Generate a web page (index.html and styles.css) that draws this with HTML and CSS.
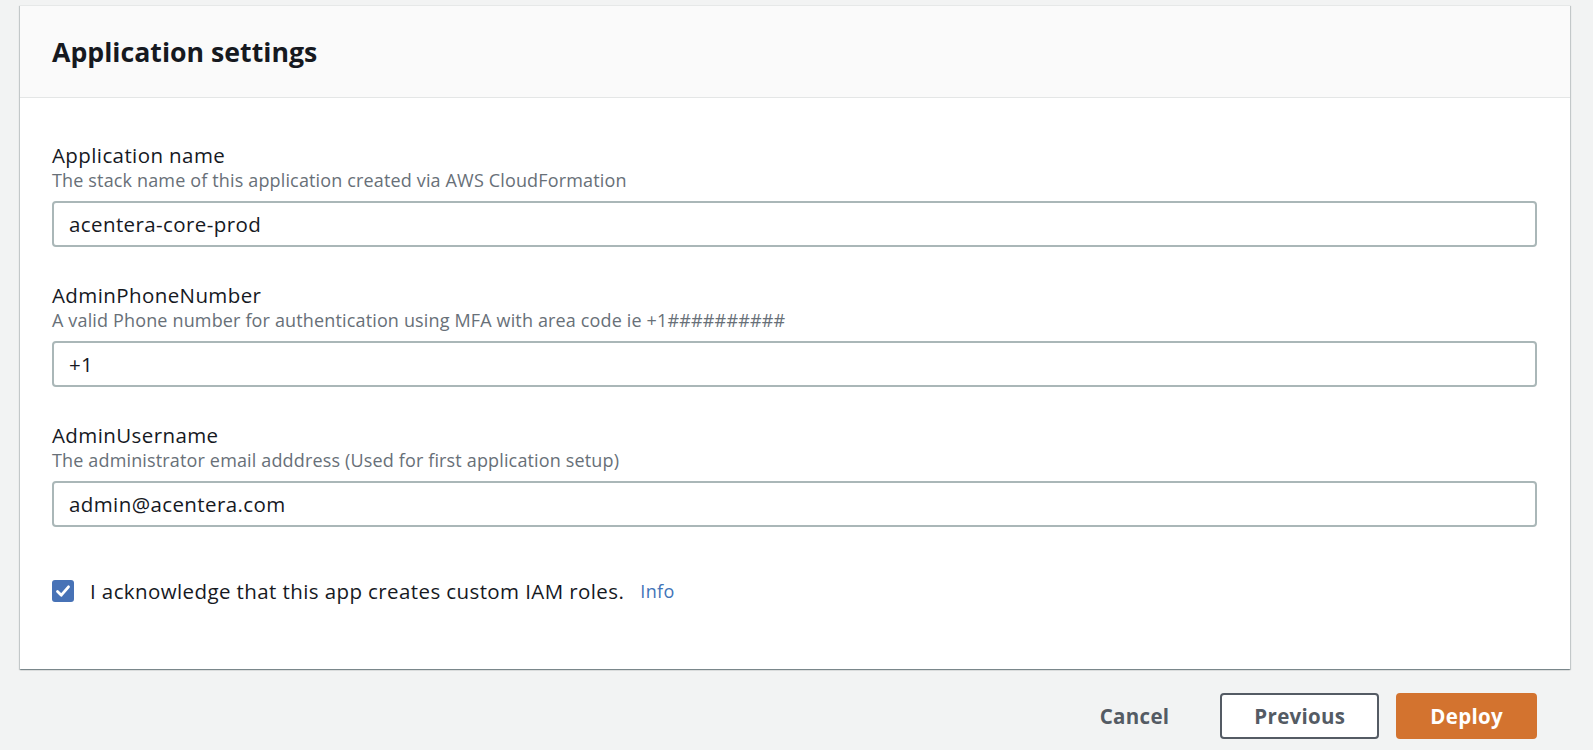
FILE: index.html
```html
<!DOCTYPE html>
<html>
<head>
<meta charset="utf-8">
<link rel="stylesheet" href="styles.css">
</head>
<body>
<div class="page">
  <section class="card">
    <header class="card-header">
      <h2 class="card-title">Application settings</h2>
    </header>
    <div class="card-body">
      <div class="field">
        <label class="field-label">Application name</label>
        <div class="field-desc">The stack name of this application created via AWS CloudFormation</div>
        <div class="input">acentera-core-prod</div>
      </div>
      <div class="field">
        <label class="field-label">AdminPhoneNumber</label>
        <div class="field-desc">A valid Phone number for authentication using MFA with area code ie +1##########</div>
        <div class="input">+1</div>
      </div>
      <div class="field">
        <label class="field-label">AdminUsername</label>
        <div class="field-desc">The administrator email adddress (Used for first application setup)</div>
        <div class="input">admin@acentera.com</div>
      </div>
      <div class="ack">
        <span class="checkbox">
          <svg width="22" height="22" viewBox="0 0 22 22"><path d="M5.5 11.5 L9.3 15.2 L16.5 6.8" fill="none" stroke="#fff" stroke-width="2.8" stroke-linecap="round" stroke-linejoin="round"/></svg>
        </span>
        <span class="ack-text">I acknowledge that this app creates custom IAM roles.</span>
        <a class="info">Info</a>
      </div>
    </div>
  </section>
  <div class="actions">
    <button class="btn btn-link">Cancel</button>
    <button class="btn btn-normal">Previous</button>
    <button class="btn btn-primary">Deploy</button>
  </div>
</div>
</body>
</html>
```

FILE: styles.css
```css
html, body {
  margin: 0;
  padding: 0;
  background: #f2f3f3;
  font-family: "Open Sans", "Noto Sans", sans-serif;
  color: #16191f;
}
.page {
  padding: 5px 23px 0 20px;
}
.card {
  background: #fff;
  border-top: 1px solid #e6e8e8;
  box-shadow: 0 1px 1px 0 rgba(0, 28, 36, 0.3), 1px 1px 1px 0 rgba(0, 28, 36, 0.15), -1px 1px 1px 0 rgba(0, 28, 36, 0.15);
}
.card-header {
  height: 91px;
  background: #fafafa;
  border-bottom: 1px solid #e4e6e6;
  display: flex;
  align-items: center;
  padding: 0 32px;
}
.card-title {
  margin: 0;
  font-size: 26.7px;
  font-weight: 700;
  color: #16191f;
}
.card-body {
  padding: 43px 33px 64px 32px;
}
.field {
  display: flex;
  flex-direction: column;
  margin-bottom: 34px;
}
.field-label {
  font-size: 20.5px;
  line-height: 28px;
  letter-spacing: 0.4px;
  color: #16191f;
}
.field-desc {
  font-size: 18px;
  line-height: 22px;
  letter-spacing: 0.15px;
  color: #687078;
}
.input {
  margin-top: 10px;
  height: 46px;
  box-sizing: border-box;
  border: 2px solid #aab7b8;
  border-radius: 4px;
  padding: 0 15px;
  display: flex;
  align-items: center;
  font-size: 20.5px;
  letter-spacing: 0.4px;
  color: #16191f;
}
.ack {
  display: flex;
  align-items: center;
  height: 28px;
  margin-top: 50px;
}
.checkbox {
  width: 22px;
  height: 22px;
  border-radius: 3px;
  background: #4772b6;
  display: flex;
  flex: none;
}
.ack-text {
  margin-left: 16px;
  font-size: 20.5px;
  letter-spacing: 0.4px;
  color: #16191f;
}
.info {
  margin-left: 16px;
  font-size: 18px;
  letter-spacing: 0.4px;
  color: #3f74b8;
}
.actions {
  display: flex;
  justify-content: flex-end;
  gap: 17px;
  padding: 24px 33px 0 0;
}
.btn {
  height: 46px;
  box-sizing: border-box;
  border: 2px solid transparent;
  border-radius: 4px;
  padding: 0 32px;
  font-family: "Open Sans", "Noto Sans", sans-serif;
  font-size: 20.5px;
  letter-spacing: 0.3px;
  font-weight: 700;
  background: transparent;
  color: #545b64;
}
.btn-normal {
  background: #fff;
  border-color: #545b64;
}
.btn-primary {
  background: #d3732f;
  border-color: #d3732f;
  color: #fff;
}
```
